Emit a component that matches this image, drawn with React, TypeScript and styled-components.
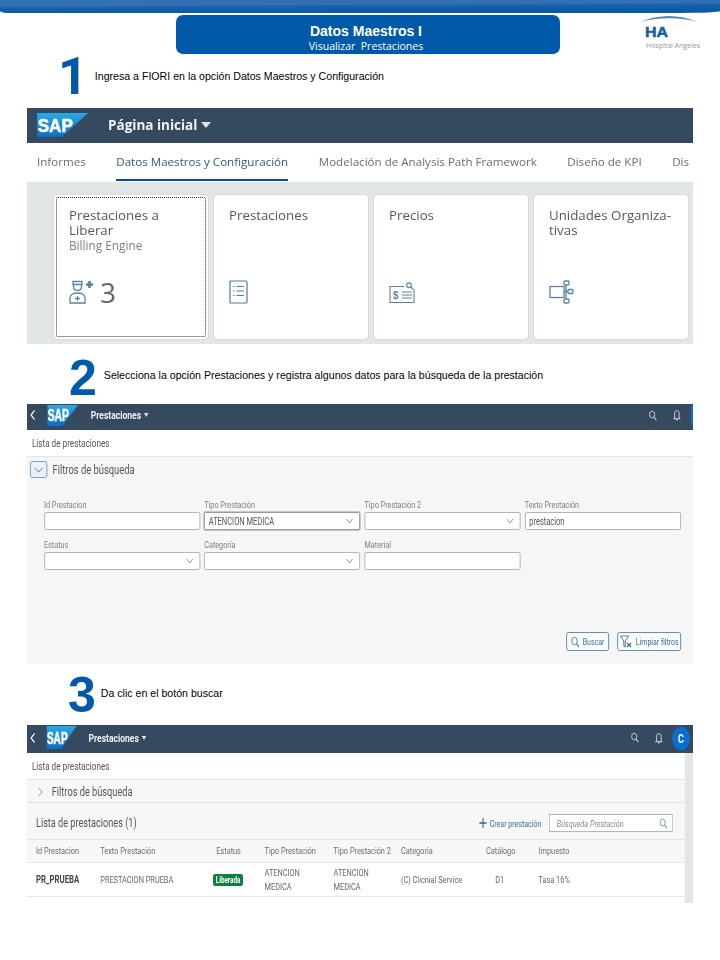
import styled, { createGlobalStyle } from "styled-components";

const GlobalStyle = createGlobalStyle`
  html, body {
    margin: 0;
    padding: 0;
    background: #fff;
  }
`;

const BRAND = "#0059a9";
const SHELL_BG = "#354a5f";
// the two lower captures are squeezed sideways in the reference, so they are
// laid out wider and scaled back: x sizes in them are real px / 0.75
const SQUEEZE = 0.75;

const Page = styled.div`
  width: 720px;
  height: 960px;
  overflow: hidden;
  display: flex;
  flex-direction: column;
  font-family: "Liberation Sans", Arial, sans-serif;
`;

const TopBand = styled.div`
  height: 13px;
  background: linear-gradient(179.7deg, #336fb4 0 6px, #1c61ac 8px, #0c5aa7 13px);
  border-radius: 0 0 40px 10px / 0 0 2px 2px;
`;

const Banner = styled.div`
  height: 41px;
  display: flex;
  align-items: flex-end;
  padding-left: 176px;
`;

const TitleBox = styled.div`
  width: 384px;
  height: 39px;
  box-sizing: border-box;
  padding: 6px 4px 0 0;
  border-radius: 7px;
  background: ${BRAND};
  color: #fff;
  display: flex;
  flex-direction: column;
  align-items: center;
  justify-content: center;
`;

const Title = styled.div`
  font-size: 14px;
  font-weight: 700;
  line-height: 16px;
`;

const Subtitle = styled.div`
  font-size: 10.5px;
  line-height: 14px;
  font-family: "Open Sans", sans-serif;
  white-space: pre;
`;

const LogoSlot = styled.div`
  margin-left: 78px;
  height: 39px;
`;

const Step = styled.div<{ $h: number; $left: number; $top: number; $gap: number }>`
  height: ${(p) => p.$h}px;
  box-sizing: border-box;
  padding: ${(p) => p.$top}px 0 0 ${(p) => p.$left}px;
  display: flex;
  align-items: flex-start;
  gap: ${(p) => p.$gap}px;
`;

const StepNumber = styled.div<{ $size: number }>`
  font-size: ${(p) => p.$size}px;
  line-height: 38px;
  height: 38px;
  font-weight: 700;
  color: ${BRAND};
`;

// the reference's 1 has no foot, Liberation's has
const StepOne = styled(StepNumber)`
  font-family: "Roboto", sans-serif;
`;

const StepText = styled.div<{ $top: number }>`
  margin-top: ${(p) => p.$top}px;
  font-size: 10.6px;
  line-height: 12px;
  color: #000;
  white-space: nowrap;
`;

const Shot = styled.section<{ $h: number }>`
  margin-left: 27px;
  width: 666px;
  height: ${(p) => p.$h}px;
  flex: none;
  overflow: hidden;
  display: flex;
  flex-direction: column;
  filter: blur(0.35px);
`;

const Squeezed = styled.div`
  width: ${666 / SQUEEZE}px;
  height: 100%;
  display: flex;
  flex-direction: column;
  transform: scaleX(${SQUEEZE});
  transform-origin: 0 0;
  font-family: "Roboto", sans-serif;
`;

const ShellBar = styled.header<{ $h: number; $left: number; $bottom: number }>`
  height: ${(p) => p.$h}px;
  flex: none;
  box-sizing: border-box;
  padding: 0 0 ${(p) => p.$bottom}px ${(p) => p.$left}px;
  background: ${SHELL_BG};
  color: #fff;
  display: flex;
  align-items: center;
`;

const HomeTitle = styled.div`
  margin-left: 20px;
  font-family: "Open Sans", sans-serif;
  font-size: 13.5px;
  font-weight: 700;
  color: #f0f3f5;
  display: flex;
  align-items: center;
  gap: 4px;
`;

const AppTitle = styled.div<{ $left: number }>`
  margin-left: ${(p) => p.$left}px;
  font-size: 11.4px;
  font-weight: 700;
  color: #eef1f3;
  display: flex;
  align-items: center;
  gap: 4px;
`;

const Caret = styled.span<{ $w: number; $h: number }>`
  width: 0;
  height: 0;
  border-left: ${(p) => p.$w / 2}px solid transparent;
  border-right: ${(p) => p.$w / 2}px solid transparent;
  border-top: ${(p) => p.$h}px solid #dfe4e8;
`;

const BackSlot = styled.div<{ $right: number }>`
  display: flex;
  margin-right: ${(p) => p.$right}px;
`;

const ShellActions = styled.div<{ $right: number }>`
  margin-left: auto;
  padding-right: ${(p) => p.$right}px;
  display: flex;
  align-items: center;
  gap: 21px;
`;

const Avatar = styled.div`
  width: 24px;
  height: 23px;
  margin: 1px 0 -1px -9px;
  border-radius: 50%;
  background: #0a6ed1;
  color: #fff;
  font-size: 12px;
  font-weight: 700;
  display: flex;
  align-items: center;
  justify-content: center;
`;

const AvatarSliver = styled.div`
  width: 3px;
  height: 20px;
  margin-left: -8px;
  background: #0a6ed1;
  border-radius: 3px 0 0 3px;
`;

const Tabs = styled.nav`
  height: 39px;
  flex: none;
  box-sizing: border-box;
  background: #fff;
  display: flex;
  gap: 30.5px;
  padding-left: 10px;
  overflow: hidden;
  font-family: "Open Sans", sans-serif;
  font-size: 11.6px;
`;

const Tab = styled.div<{ $active?: boolean }>`
  flex: none;
  height: 38px;
  box-sizing: border-box;
  padding-top: 11px;
  white-space: nowrap;
  color: ${(p) => (p.$active ? "#35587f" : "#6a6d70")};
  border-bottom: 2px solid ${(p) => (p.$active ? "#0a4e93" : "transparent")};
`;

const TileArea = styled.div`
  flex: 1;
  background: #e3e6e7;
  display: flex;
  gap: 6px;
  padding: 13px 0 0 27px;
`;

const Tile = styled.article<{ $focus?: boolean }>`
  width: 154px;
  height: 144px;
  flex: none;
  box-sizing: border-box;
  padding: 13px 15px 12px;
  background: #fff;
  border-radius: 4px;
  box-shadow: 0 0 2px rgba(0, 0, 0, 0.16);
  display: flex;
  flex-direction: column;
  outline: ${(p) => (p.$focus ? "1px dotted #333" : "none")};
  outline-offset: -3px;
  font-family: "Open Sans", sans-serif;
`;

const TileTitle = styled.div`
  font-size: 13.3px;
  line-height: 15px;
  color: #55585b;
`;

const TileSub = styled.div`
  font-size: 11.8px;
  line-height: 14px;
  color: #7d8184;
`;

const TileFooter = styled.div`
  margin-top: auto;
  margin-bottom: 23px;
  display: flex;
  align-items: center;
  gap: 6px;
`;

const TileCount = styled.span`
  font-size: 28px;
  line-height: 24px;
  color: #666;
`;

const CrumbBar = styled.div`
  height: 27px;
  flex: none;
  box-sizing: border-box;
  background: #fff;
  padding-left: 6.5px;
  display: flex;
  align-items: center;
  font-size: 10.9px;
  color: #555;
  border-bottom: 1px solid #e1e3e4;
`;

const FilterArea = styled.div`
  flex: 1;
  background: #f6f6f6;
  display: flex;
  flex-direction: column;
`;

const FilterHead = styled.div`
  display: flex;
  align-items: center;
  gap: 7px;
  padding: 4px 0 0 4px;
`;

const ToggleBox = styled.div`
  width: 23px;
  height: 17px;
  box-sizing: border-box;
  border: 1px solid #6f93b8;
  border-radius: 3px;
  background: #e9f0f6;
  display: flex;
  align-items: center;
  justify-content: center;
`;

const FilterTitle = styled.div`
  font-size: 12.5px;
  color: #555;
`;

const FormGrid = styled.div`
  display: grid;
  grid-template-columns: repeat(4, 208px);
  column-gap: 5.7px;
  row-gap: 8px;
  margin-top: 20px;
  padding-left: 22.6px;
`;

const Field = styled.div`
  display: flex;
  flex-direction: column;
  font-size: 9.7px;
  line-height: 13px;
  color: #7b7e80;
`;

const Control = styled.div<{ $focus?: boolean }>`
  height: 18px;
  margin-top: 1px;
  box-sizing: border-box;
  background: #fff;
  border: 1px solid ${(p) => (p.$focus ? "#8e9194" : "#a8abad")};
  box-shadow: ${(p) => (p.$focus ? "0 0 0 1px #c5c7c9" : "none")};
  border-radius: 2px;
  padding: 0 8px 0 5px;
  display: flex;
  align-items: center;
  justify-content: space-between;
  color: #555;
  font-size: 10px;
`;

const FilterActions = styled.div`
  margin-top: auto;
  padding: 0 16px 13px 0;
  display: flex;
  justify-content: flex-end;
  gap: 10.7px;
`;

const OutlineButton = styled.div<{ $w: number }>`
  width: ${(p) => p.$w}px;
  height: 19px;
  box-sizing: border-box;
  border: 1px solid #54809f;
  border-radius: 3px;
  background: #fbfcfd;
  color: #3b6d9a;
  font-size: 9.3px;
  display: flex;
  align-items: center;
  justify-content: center;
  gap: 4px;
`;

const ResultBody = styled.div`
  flex: 1;
  position: relative;
  margin-right: 10.7px;
  display: flex;
  flex-direction: column;
  background: #fff;
`;

const ScrollTrack = styled.div`
  position: absolute;
  top: 0;
  bottom: 0;
  right: -10.7px;
  width: 10.7px;
  background: #e4e6e6;
`;

const CollapsedFilter = styled.div`
  height: 23px;
  flex: none;
  box-sizing: border-box;
  padding: 2px 0 0 12px;
  background: #f7f7f7;
  border-bottom: 1px solid #e1e3e4;
  display: flex;
  align-items: center;
  gap: 9px;
  font-size: 12.3px;
  color: #555;
`;

const ListHead = styled.div`
  height: 36px;
  flex: none;
  box-sizing: border-box;
  background: #f7f7f7;
  display: flex;
  align-items: center;
  padding: 4px 16.4px 0 12px;
`;

const ListTitle = styled.div`
  flex: 1;
  font-size: 12.2px;
  color: #555;
`;

const CreateLink = styled.div`
  display: flex;
  align-items: center;
  gap: 4px;
  margin-right: 10.7px;
  color: #3b6d9a;
  font-size: 9.4px;
`;

const SearchBox = styled.div`
  width: 164.5px;
  height: 18px;
  box-sizing: border-box;
  border: 1px solid #b4b7b9;
  background: #fff;
  display: flex;
  align-items: center;
  justify-content: space-between;
  padding: 0 6px 0 9px;
  font-size: 9.7px;
  font-style: italic;
  color: #85888a;
`;

const TableRow = styled.div<{ $head?: boolean }>`
  height: ${(p) => (p.$head ? 23 : 35)}px;
  flex: none;
  box-sizing: border-box;
  display: grid;
  grid-template-columns: 85.7px 154.7px 64.4px 92px 89.9px 113.3px 70.1px 1fr;
  align-items: center;
  padding-left: 12px;
  background: ${(p) => (p.$head ? "#f7f7f7" : "#fff")};
  border-top: 1px solid #e3e5e6;
  border-bottom: ${(p) => (p.$head ? "none" : "1px solid #e3e5e6")};
  font-size: 9.8px;
  line-height: 14px;
  color: ${(p) => (p.$head ? "#6a6d70" : "#666")};
`;

const Cell = styled.div<{ $strong?: boolean; $pad?: number }>`
  padding-left: ${(p) => p.$pad ?? 0}px;
  font-weight: ${(p) => (p.$strong ? 700 : 400)};
  font-size: ${(p) => (p.$strong ? "10.4px" : "inherit")};
  color: ${(p) => (p.$strong ? "#444" : "inherit")};
  white-space: pre-line;
`;

const StatusBadge = styled.span`
  display: block;
  width: 39.5px;
  height: 12px;
  margin-left: -4px;
  line-height: 12px;
  border-radius: 3px;
  background: #107e3e;
  color: #fff;
  font-size: 8.4px;
  font-weight: 700;
  text-align: center;
`;

const SapLogo = ({ w, h }: { w: number; h: number }) => (
  <svg width={w} height={h} viewBox="0 0 78 40" preserveAspectRatio="none">
    <defs>
      <linearGradient id="sapfill" x1="0" y1="0" x2="0" y2="1">
        <stop offset="0" stopColor="#2aa9e6" />
        <stop offset="1" stopColor="#0a6fc4" />
      </linearGradient>
    </defs>
    <polygon points="0,0 78,0 38,40 0,40" fill="url(#sapfill)" />
    <text
      x="1"
      y="31"
      fontFamily="Liberation Sans, sans-serif"
      fontWeight="700"
      fontSize="30"
      fill="#fff"
      stroke="#fff"
      strokeWidth="0.9"
      textLength="54"
      lengthAdjust="spacingAndGlyphs"
    >
      SAP
    </text>
  </svg>
);

const HospitalLogo = () => (
  <svg width="64" height="39" viewBox="0 0 64 39">
    <path d="M2 7 C20 -1 42 -1 60 7 C42 2 20 2 2 7 Z" fill="#5b89b5" />
    <text
      x="7"
      y="22"
      fontFamily="Liberation Sans, sans-serif"
      fontWeight="700"
      fontSize="15"
      fill="#1f5d9c"
      stroke="#1f5d9c"
      strokeWidth="0.6"
      textLength="23"
      lengthAdjust="spacingAndGlyphs"
    >
      HA
    </text>
    <text x="8" y="33" fontFamily="Open Sans, sans-serif" fontSize="7.4" fill="#8a98a6" textLength="54" lengthAdjust="spacingAndGlyphs">
      Hospital Angeles
    </text>
  </svg>
);

const Chevron = ({ open = true, color = "#77797b", size = 10 }: { open?: boolean; color?: string; size?: number }) => (
  <svg width={size} height="10" viewBox="0 0 10 10" preserveAspectRatio="none" fill="none" stroke={color} strokeWidth="0.9">
    {open ? <path d="M1 3 L5 7 L9 3" /> : <path d="M3 1 L7 5 L3 9" />}
  </svg>
);

const SearchGlyph = ({ color, size = 11 }: { color: string; size?: number }) => (
  <svg width={size} height={size} viewBox="0 0 12 12" fill="none" stroke={color} strokeWidth="1">
    <circle cx="5" cy="5" r="3.7" />
    <path d="M7.7 7.7 L11 11" strokeWidth="1.3" />
  </svg>
);

const BellGlyph = () => (
  <svg width="11" height="12" viewBox="0 0 10 12" preserveAspectRatio="none" fill="none" stroke="#dfe4e8" strokeWidth="1">
    <path d="M2.3 8.8 V4.2 C2.3 0.8 7.7 0.8 7.7 4.2 V8.8 L9 9.7 H1 Z" />
    <path d="M4 10.2 C4 11.7 6 11.7 6 10.2" />
  </svg>
);

const ClearFilterGlyph = () => (
  <svg width="18" height="13" viewBox="0 0 14 13" preserveAspectRatio="none" fill="none" stroke="#3b6d9a" strokeWidth="0.9">
    <path d="M1 1 H9.5 L6 6 V12 L4.5 11 V6 Z" />
    <path d="M8 8 L12 12 M12 8 L8 12" strokeWidth="1.2" />
  </svg>
);

const PlusGlyph = () => (
  <svg width="10" height="10" viewBox="0 0 10 10" stroke="#2f6496" strokeWidth="1.4">
    <path d="M5 0 V10 M0 5 H10" />
  </svg>
);

const NurseIcon = () => (
  <svg width="25" height="24" viewBox="0 0 25 24" fill="none" stroke="#5a82a8" strokeWidth="1.3">
    <path d="M4 1.5 H13 V4.5 H4 Z" />
    <path d="M4.5 4.5 V7 C4.5 11.5 12.5 11.5 12.5 7 V4.5" />
    <path d="M1 23 V18 C1 14.5 5 13 8.5 13 C12 13 16 14.5 16 18 V23 Z" />
    <path d="M8.5 16 V21 M6 18.5 H11" />
    <path d="M20.5 1 V8 M17 4.5 H24" strokeWidth="2.6" />
  </svg>
);

const ListIcon = () => (
  <svg width="19" height="24" viewBox="0 0 19 24" fill="none" stroke="#4f7aa3" strokeWidth="1.2">
    <rect x="1" y="1" width="17" height="22" rx="1" />
    <path d="M4 6.5 H5.5 M7.5 6.5 H15 M4 11 H5.5 M7.5 11 H15 M4 15.5 H5.5 M7.5 15.5 H15" />
  </svg>
);

const PriceIcon = () => (
  <svg width="26" height="22" viewBox="0 0 26 22" fill="none" stroke="#5a82a8" strokeWidth="1.1">
    <path d="M15 4.5 H1 V20.5 H25 V7" />
    <circle cx="20" cy="3.2" r="2.3" />
    <path d="M21.8 5 L24 7" />
    <text x="4" y="16.5" fontFamily="Liberation Sans, sans-serif" fontSize="10" fontWeight="700" fill="#5a82a8" stroke="none">
      $
    </text>
    <path d="M13 10 H23 M13 13 H23 M13 16 H23" />
  </svg>
);

const OrgIcon = () => (
  <svg width="26" height="24" viewBox="0 0 26 24" fill="none" stroke="#5a82a8" strokeWidth="1.3">
    <rect x="1" y="6.5" width="14" height="11" />
    <rect x="15" y="1" width="5" height="4" rx="1" />
    <rect x="19" y="9.5" width="5" height="4" rx="1" />
    <rect x="15" y="19" width="5" height="4" rx="1" />
    <path d="M15 11.5 H19 M17 5 V19" />
  </svg>
);

const BackChevron = () => (
  <svg width="8" height="12" viewBox="0 0 8 12" fill="none" stroke="#fff" strokeWidth="1.4">
    <path d="M6 1.5 L1.5 6 L6 10.5" />
  </svg>
);

const filterFields = [
  { label: "Id Prestacion" },
  { label: "Tipo Prestación", value: "ATENCION MEDICA", select: true, focus: true },
  { label: "Tipo Prestación 2", select: true },
  { label: "Texto Prestación", value: "prestacion" },
  { label: "Estatus", select: true },
  { label: "Categoría", select: true },
  { label: "Material" },
];

const App = () => (
  <Page>
    <GlobalStyle />
    <TopBand />
    <Banner>
      <TitleBox>
        <Title>Datos Maestros I</Title>
        <Subtitle>{"Visualizar  Prestaciones"}</Subtitle>
      </TitleBox>
      <LogoSlot>
        <HospitalLogo />
      </LogoSlot>
    </Banner>

    <Step $h={54} $left={58} $top={4} $gap={7}>
      <StepOne $size={52}>1</StepOne>
      <StepText $top={12}>Ingresa a FIORI en la opción Datos Maestros y Configuración</StepText>
    </Step>

    <Shot $h={236}>
      <ShellBar $h={35} $left={10} $bottom={1}>
        <SapLogo w={51} h={24} />
        <HomeTitle>
          Página inicial
          <Caret $w={10} $h={6} />
        </HomeTitle>
      </ShellBar>
      <Tabs>
        <Tab>Informes</Tab>
        <Tab $active>Datos Maestros y Configuración</Tab>
        <Tab>Modelación de Analysis Path Framework</Tab>
        <Tab>Diseño de KPI</Tab>
        <Tab>Dis</Tab>
      </Tabs>
      <TileArea>
        <Tile $focus>
          <TileTitle>Prestaciones a Liberar</TileTitle>
          <TileSub>Billing Engine</TileSub>
          <TileFooter>
            <NurseIcon />
            <TileCount>3</TileCount>
          </TileFooter>
        </Tile>
        <Tile>
          <TileTitle>Prestaciones</TileTitle>
          <TileFooter>
            <ListIcon />
          </TileFooter>
        </Tile>
        <Tile>
          <TileTitle>Precios</TileTitle>
          <TileFooter>
            <PriceIcon />
          </TileFooter>
        </Tile>
        <Tile>
          <TileTitle>
            Unidades Organiza-
            <br />
            tivas
          </TileTitle>
          <TileFooter>
            <OrgIcon />
          </TileFooter>
        </Tile>
      </TileArea>
    </Shot>

    <Step $h={60} $left={69} $top={15} $gap={7}>
      <StepNumber $size={50}>2</StepNumber>
      <StepText $top={10}>Selecciona la opción Prestaciones y registra algunos datos para la búsqueda de la prestación</StepText>
    </Step>

    <Shot $h={260}>
      <Squeezed>
        <ShellBar $h={26} $left={4} $bottom={4}>
          <BackSlot $right={15}>
            <BackChevron />
          </BackSlot>
          <SapLogo w={41} h={21} />
          <AppTitle $left={17}>
            Prestaciones
            <Caret $w={7} $h={4} />
          </AppTitle>
          <ShellActions $right={0}>
            <SearchGlyph color="#dfe4e8" />
            <BellGlyph />
            <AvatarSliver />
          </ShellActions>
        </ShellBar>
        <CrumbBar>Lista de prestaciones</CrumbBar>
        <FilterArea>
          <FilterHead>
            <ToggleBox>
              <Chevron color="#4a7197" size={13} />
            </ToggleBox>
            <FilterTitle>Filtros de búsqueda</FilterTitle>
          </FilterHead>
          <FormGrid>
            {filterFields.map((f) => (
              <Field key={f.label}>
                {f.label}
                <Control $focus={f.focus}>
                  <span>{f.value}</span>
                  {f.select && <Chevron />}
                </Control>
              </Field>
            ))}
          </FormGrid>
          <FilterActions>
            <OutlineButton $w={57.3}>
              <SearchGlyph color="#3b6d9a" size={12} />
              Buscar
            </OutlineButton>
            <OutlineButton $w={85.3}>
              <ClearFilterGlyph />
              Limpiar filtros
            </OutlineButton>
          </FilterActions>
        </FilterArea>
      </Squeezed>
    </Shot>

    <Step $h={61} $left={68} $top={12} $gap={5}>
      <StepNumber $size={50}>3</StepNumber>
      <StepText $top={11}>Da clic en el botón buscar</StepText>
    </Step>

    <Shot $h={178}>
      <Squeezed>
        <ShellBar $h={28} $left={4} $bottom={3}>
          <BackSlot $right={14}>
            <BackChevron />
          </BackSlot>
          <SapLogo w={40} h={23} />
          <AppTitle $left={16}>
            Prestaciones
            <Caret $w={7} $h={4} />
          </AppTitle>
          <ShellActions $right={4}>
            <SearchGlyph color="#dfe4e8" />
            <BellGlyph />
            <Avatar>C</Avatar>
          </ShellActions>
        </ShellBar>
        <ResultBody>
          <ScrollTrack />
          <CrumbBar>Lista de prestaciones</CrumbBar>
          <CollapsedFilter>
            <Chevron open={false} size={12} />
            Filtros de búsqueda
          </CollapsedFilter>
          <ListHead>
            <ListTitle>Lista de prestaciones (1)</ListTitle>
            <CreateLink>
              <PlusGlyph />
              Crear prestación
            </CreateLink>
            <SearchBox>
              Búsqueda Prestación
              <SearchGlyph color="#5c87ad" />
            </SearchBox>
          </ListHead>
          <TableRow $head>
            <Cell>Id Prestacion</Cell>
            <Cell>Texto Prestación</Cell>
            <Cell>Estatus</Cell>
            <Cell>Tipo Prestación</Cell>
            <Cell>Tipo Prestación 2</Cell>
            <Cell>Categoría</Cell>
            <Cell>Catálogo</Cell>
            <Cell>Impuesto</Cell>
          </TableRow>
          <TableRow>
            <Cell $strong>PR_PRUEBA</Cell>
            <Cell>PRESTACION PRUEBA</Cell>
            <Cell>
              <StatusBadge>Liberada</StatusBadge>
            </Cell>
            <Cell>{"ATENCION\nMEDICA"}</Cell>
            <Cell>{"ATENCION\nMEDICA"}</Cell>
            <Cell>(C) Clicnial Service</Cell>
            <Cell $pad={12.4}>D1</Cell>
            <Cell>Tasa 16%</Cell>
          </TableRow>
        </ResultBody>
      </Squeezed>
    </Shot>
  </Page>
);

export default App;
